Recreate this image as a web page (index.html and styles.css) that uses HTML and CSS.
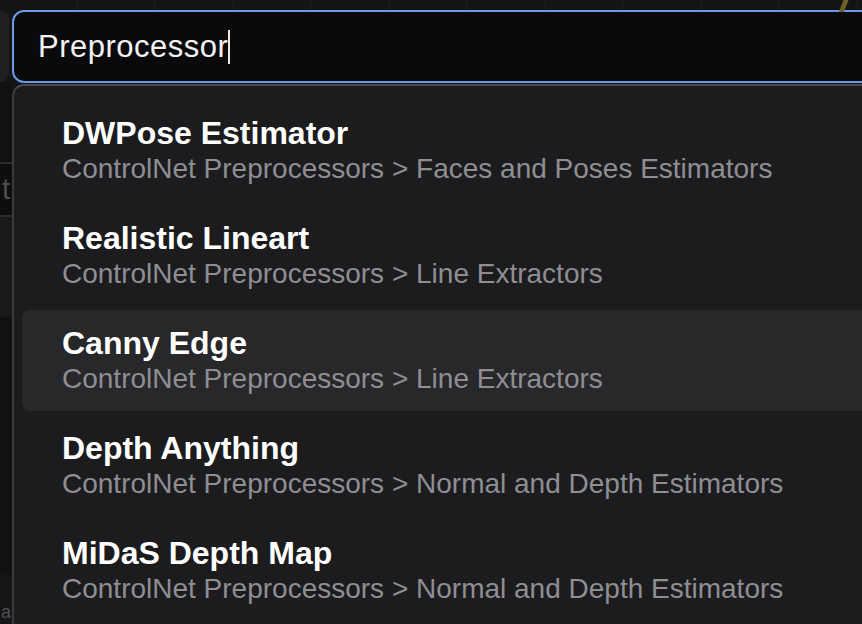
FILE: index.html
```html
<!DOCTYPE html>
<html lang="en">
<head>
<meta charset="utf-8">
<title>Node search</title>
<link rel="stylesheet" href="styles.css">
</head>
<body>
<div class="page">
  <div class="stripe"></div>
  <aside class="side">
    <div class="side-top"></div>
    <div class="side-pill"></div>
    <div class="side-dark"></div>
    <div class="side-field"><span>t</span></div>
    <div class="side-mid"></div>
    <div class="side-low"></div>
    <div class="side-bottom"><span>a</span></div>
  </aside>
  <main class="main">
    <div class="search">
      <span class="query">Preprocessor</span><span class="caret"></span>
    </div>
    <ul class="results">
      <li class="item">
        <div class="title">DWPose Estimator</div>
        <div class="path">ControlNet Preprocessors &gt; Faces and Poses Estimators</div>
      </li>
      <li class="item">
        <div class="title">Realistic Lineart</div>
        <div class="path">ControlNet Preprocessors &gt; Line Extractors</div>
      </li>
      <li class="item active">
        <div class="title">Canny Edge</div>
        <div class="path">ControlNet Preprocessors &gt; Line Extractors</div>
      </li>
      <li class="item">
        <div class="title">Depth Anything</div>
        <div class="path">ControlNet Preprocessors &gt; Normal and Depth Estimators</div>
      </li>
      <li class="item">
        <div class="title">MiDaS Depth Map</div>
        <div class="path">ControlNet Preprocessors &gt; Normal and Depth Estimators</div>
      </li>
    </ul>
  </main>
</div>
</body>
</html>
```
FILE: styles.css
```css
* { box-sizing: border-box; }
html, body {
  margin: 0;
  padding: 0;
  width: 862px;
  height: 624px;
  overflow: hidden;
  background: #121213;
  font-family: "Liberation Sans", Arial, Helvetica, sans-serif;
}
.page {
  position: relative;
  display: grid;
  grid-template-columns: 12px 1fr;
  grid-template-rows: 624px;
  height: 624px;
  overflow: hidden;
  background:
    repeating-linear-gradient(90deg, #141415 0 76px, #1a1a1b 76px 78px);
}
.stripe {
  position: absolute;
  left: 842px;
  top: -4px;
  width: 5px;
  height: 16px;
  background: #6e6128;
  transform: skewX(-22deg);
}
.side {
  display: flex;
  flex-direction: column;
  overflow: hidden;
}
.side-top { height: 10px; }
.side-pill {
  height: 72px;
  width: 9px;
  background: #202021;
  border-radius: 0 9px 9px 0;
}
.side-dark { height: 80px; background: #111112; }
.side-field {
  height: 55px;
  background: #0e0e0f;
  border-top: 2px solid #2b2b2c;
  border-bottom: 2px solid #2b2b2c;
  display: flex;
  align-items: center;
  justify-content: flex-end;
  padding-right: 2px;
  color: #4e4e50;
  font-size: 29px;
  line-height: 1;
}
.side-mid { height: 100px; background: #1a1a1b; }
.side-low { height: 258px; background: #111112; }
.side-bottom {
  flex: 1;
  background: #161617;
  color: #4e4e50;
  font-size: 18px;
  display: flex;
  align-items: flex-end;
  justify-content: flex-end;
  padding-right: 1px;
  padding-bottom: 3px;
  line-height: 1;
}
.main {
  padding-top: 10px;
  min-width: 0;
  overflow: hidden;
}
.search {
  height: 73px;
  width: 880px;
  background: #0a0a0c;
  border: 2px solid #6c9ae6;
  border-radius: 12px;
  display: flex;
  align-items: center;
  padding-left: 24px;
}
.query {
  color: #f2f2f2;
  font-size: 31px;
  letter-spacing: 0.5px;
}
.caret {
  display: inline-block;
  width: 2px;
  height: 34px;
  background: #e8e8e8;
}
.results {
  list-style: none;
  margin: 1px 0 0 0;
  padding: 14px 0 0 8px;
  width: 880px;
  height: 540px;
  overflow: hidden;
  background: #1c1c1e;
  border-left: 2px solid #3a3a3c;
  border-top: 2px solid #4a4a4c;
  border-radius: 12px 0 0 0;
}
.item {
  height: 101px;
  margin-bottom: 4px;
  padding: 15px 0 0 40px;
  border-radius: 8px;
}
.item.active { background: #28282a; }
.title {
  color: #ffffff;
  font-weight: bold;
  font-size: 32px;
  line-height: 36px;
  white-space: nowrap;
}
.path {
  color: #8e8e93;
  font-size: 28px;
  line-height: 35px;
  white-space: nowrap;
}
```
